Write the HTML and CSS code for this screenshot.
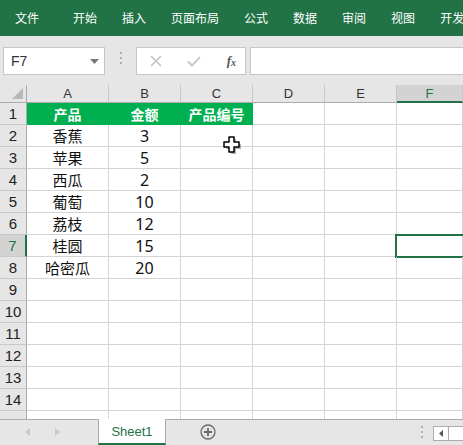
FILE: index.html
```html
<!DOCTYPE html>
<html>
<head>
<meta charset="utf-8">
<link rel="stylesheet" href="styles.css">
</head>
<body>
<div class="app">
  <div class="ribbon">
    <span class="tab first">文件</span>
    <span class="tab">开始</span>
    <span class="tab">插入</span>
    <span class="tab">页面布局</span>
    <span class="tab">公式</span>
    <span class="tab">数据</span>
    <span class="tab">审阅</span>
    <span class="tab">视图</span>
    <span class="tab">开发</span>
  </div>
  <div class="fbar">
    <div class="namebox"><span>F7</span><svg class="dd" width="9" height="5" viewBox="0 0 9 5"><path d="M0 0h9L4.5 5z" fill="#777"/></svg></div>
    <div class="vdots"><i></i><i></i><i></i></div>
    <div class="fxbox">
      <svg width="12" height="12" viewBox="0 0 12 12"><path d="M1 1L11 11M11 1L1 11" stroke="#c4c4c4" stroke-width="1.6"/></svg>
      <svg width="14" height="12" viewBox="0 0 14 12"><path d="M1 6.5L5 10.5L13 2" stroke="#c4c4c4" stroke-width="1.8" fill="none"/></svg>
      <span class="fx">f<sub>x</sub></span>
    </div>
    <div class="finput"></div>
  </div>
  <div class="sheet">
    <div class="grid">
      <div class="ch corner"><svg width="11" height="11" viewBox="0 0 11 11"><path d="M11 0V11H0z" fill="#b8b8b8"/></svg></div>
      <div class="ch">A</div><div class="ch">B</div><div class="ch">C</div><div class="ch">D</div><div class="ch">E</div><div class="ch sel">F</div>

      <div class="rh">1</div><div class="c hd">产品</div><div class="c hd">金额</div><div class="c hd">产品编号</div><div class="c"></div><div class="c"></div><div class="c"></div>
      <div class="rh">2</div><div class="c">香蕉</div><div class="c num">3</div><div class="c"></div><div class="c"></div><div class="c"></div><div class="c"></div>
      <div class="rh">3</div><div class="c">苹果</div><div class="c num">5</div><div class="c"></div><div class="c"></div><div class="c"></div><div class="c"></div>
      <div class="rh">4</div><div class="c">西瓜</div><div class="c num">2</div><div class="c"></div><div class="c"></div><div class="c"></div><div class="c"></div>
      <div class="rh">5</div><div class="c">葡萄</div><div class="c num">10</div><div class="c"></div><div class="c"></div><div class="c"></div><div class="c"></div>
      <div class="rh">6</div><div class="c">荔枝</div><div class="c num">12</div><div class="c"></div><div class="c"></div><div class="c"></div><div class="c"></div>
      <div class="rh sel">7</div><div class="c">桂圆</div><div class="c num">15</div><div class="c"></div><div class="c"></div><div class="c"></div><div class="c active"></div>
      <div class="rh">8</div><div class="c">哈密瓜</div><div class="c num">20</div><div class="c"></div><div class="c"></div><div class="c"></div><div class="c"></div>
      <div class="rh">9</div><div class="c"></div><div class="c"></div><div class="c"></div><div class="c"></div><div class="c"></div><div class="c"></div>
      <div class="rh">10</div><div class="c"></div><div class="c"></div><div class="c"></div><div class="c"></div><div class="c"></div><div class="c"></div>
      <div class="rh">11</div><div class="c"></div><div class="c"></div><div class="c"></div><div class="c"></div><div class="c"></div><div class="c"></div>
      <div class="rh">12</div><div class="c"></div><div class="c"></div><div class="c"></div><div class="c"></div><div class="c"></div><div class="c"></div>
      <div class="rh">13</div><div class="c"></div><div class="c"></div><div class="c"></div><div class="c"></div><div class="c"></div><div class="c"></div>
      <div class="rh">14</div><div class="c"></div><div class="c"></div><div class="c"></div><div class="c"></div><div class="c"></div><div class="c"></div>
      <div class="rh"></div><div class="c"></div><div class="c"></div><div class="c"></div><div class="c"></div><div class="c"></div><div class="c"></div>
    </div>
    <svg class="cursor" width="20" height="20" viewBox="0 0 20 20">
      <path d="M6 1h5v5h5v5h-5v5H6v-5H1V6h5z" fill="#000" opacity="0.3" transform="translate(2 2)"/>
      <path d="M6 1h5v5h5v5h-5v5H6v-5H1V6h5z" fill="#fff" stroke="#000" stroke-width="1.5" stroke-linejoin="round"/>
    </svg>
  </div>
  <div class="tabbar">
    <div class="navs">
      <svg width="6" height="8" viewBox="0 0 6 8"><path d="M5 0V8L0 4z" fill="#c8c8c8"/></svg>
      <svg width="6" height="8" viewBox="0 0 6 8"><path d="M1 0V8L6 4z" fill="#c8c8c8"/></svg>
    </div>
    <div class="stab">Sheet1</div>
    <svg class="plus" width="16" height="16" viewBox="0 0 16 16"><circle cx="8" cy="8" r="7" fill="none" stroke="#6a6a6a" stroke-width="1.3"/><path d="M8 4v8M4 8h8" stroke="#6a6a6a" stroke-width="1.8"/></svg>
    <div class="spacer"></div>
    <div class="vdots small"><i></i><i></i><i></i></div>
    <div class="hscroll"><div class="sbtn"><svg width="4" height="7" viewBox="0 0 4 7"><path d="M4 0V7L0 3.5z" fill="#555"/></svg></div><div class="strack"></div></div>
  </div>
</div>
</body>
</html>
```
FILE: styles.css
```css
* { box-sizing: border-box; }
html, body { margin: 0; padding: 0; }
body {
  width: 463px;
  height: 445px;
  overflow: hidden;
  font-family: "Noto Sans", "Noto Sans CJK SC", sans-serif;
  background: #e6e6e6;
}
.app { width: 463px; height: 445px; display: flex; flex-direction: column; overflow: hidden; }

.ribbon {
  height: 36px;
  flex: none;
  background: #217346;
  display: flex;
  align-items: center;
  padding-left: 15px;
  white-space: nowrap;
  color: #fff;
  font-family: "Noto Sans CJK SC", sans-serif;
  font-size: 12px;
  line-height: 1;
}
.tab { margin-right: 25px; flex: none; }
.tab.first { margin-right: 34px; }

.fbar {
  height: 49px;
  flex: none;
  display: flex;
  align-items: flex-start;
  padding: 11px 0 0 3px;
  background: #e6e6e6;
}
.namebox {
  width: 102px;
  height: 28px;
  background: #fff;
  border: 1px solid #c6c6c6;
  display: flex;
  align-items: center;
  justify-content: space-between;
  padding: 0 5px 0 7px;
  font-family: "Liberation Sans", sans-serif;
  font-size: 14px;
  color: #333;
}
.vdots { width: 31px; display: flex; flex-direction: column; align-items: center; gap: 3px; padding-top: 5px; }
.vdots i { width: 2px; height: 2px; background: #b0b0b0; display: block; }
.fxbox {
  width: 110px;
  height: 28px;
  background: #fff;
  border: 1px solid #c6c6c6;
  display: flex;
  align-items: center;
  justify-content: space-between;
  padding: 0 9px 0 13px;
}
.fx { font-family: "Liberation Serif", serif; font-style: italic; font-weight: bold; font-size: 13px; color: #555; line-height: 1; }
.fx sub { font-size: 10px; vertical-align: -1px; }
.finput { flex: 1; margin-left: 4px; height: 28px; background: #fff; border: 1px solid #c6c6c6; border-right: none; }

.sheet { position: relative; height: 334px; flex: none; overflow: hidden; background: #fff; }
.grid {
  display: grid;
  grid-template-columns: 27px 82px 72px 72px 72px 72px 1fr;
  grid-template-rows: 18px repeat(15, 22px);
}
.ch {
  background: #e6e6e6;
  border-right: 1px solid #c8c8c8;
  border-bottom: 1px solid #ababab;
  font-family: "Liberation Sans", sans-serif;
  font-size: 13px;
  color: #333;
  display: flex;
  align-items: center;
  justify-content: center;
}
.ch.corner { justify-content: flex-end; align-items: flex-end; padding: 0 3px 3px 0; border-right-color: #ababab; }
.ch.sel { background: #d3d3d3; border-bottom: 2px solid #217346; color: #217346; padding-top: 1px; }
.rh {
  background: #e6e6e6;
  border-right: 1px solid #ababab;
  border-bottom: 1px solid #c8c8c8;
  font-family: "Liberation Sans", sans-serif;
  font-size: 15px;
  color: #222;
  display: flex;
  align-items: center;
  justify-content: center;
}
.rh.sel { background: #d3d3d3; border-right: 2px solid #217346; color: #217346; }
.c {
  border-right: 1px solid #d4d4d4;
  border-bottom: 1px solid #d4d4d4;
  display: flex;
  align-items: center;
  justify-content: center;
  font-family: "Noto Sans CJK SC", sans-serif;
  font-size: 15px;
  color: #111;
  line-height: 1;
  position: relative;
}
.c.num { font-family: "Noto Sans", sans-serif; font-size: 16px; }
.c.hd { background: #00b050; color: #fff; font-weight: bold; font-size: 14px; border-color: #00b050; }
.c.active::after {
  content: "";
  position: absolute;
  left: -2px; top: -1px; right: -4px; bottom: -2px;
  border: 2px solid #217346;
}
.cursor { position: absolute; left: 223px; top: 51px; }

.tabbar {
  flex: 1;
  border-top: 1px solid #ababab;
  background: #e6e6e6;
  display: flex;
  align-items: flex-start;
}
.navs { width: 98px; display: flex; gap: 23px; padding: 8px 0 0 25px; }
.stab {
  width: 68px;
  height: 26px;
  margin-top: -1px;
  background: #fff;
  border-left: 1px solid #ababab;
  border-right: 1px solid #ababab;
  border-bottom: 2px solid #217346;
  color: #217346;
  font-family: "Liberation Sans", sans-serif;
  font-size: 13px;
  display: flex;
  align-items: center;
  justify-content: center;
}
.plus { margin: 4px 0 0 34px; }
.spacer { flex: 1; }
.vdots.small { width: 10px; padding-top: 6px; gap: 3px; }
.hscroll { display: flex; margin: 6px 0 0 6px; }
.sbtn { width: 16px; height: 15px; border: 1px solid #ababab; background: #fff; display: flex; align-items: center; justify-content: center; }
.strack { width: 14px; height: 15px; background: #fff; border-top: 1px solid #ababab; border-bottom: 1px solid #ababab; }
```
